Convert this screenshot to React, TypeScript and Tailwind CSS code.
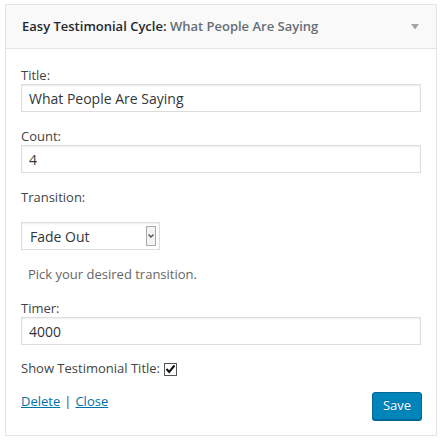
import { useState } from "react";

function Field({ label, value }: { label: string; value: string }) {
  return (
    <div className="mb-[15px]">
      <label className="block h-[18px] leading-[18px] text-[13px] text-[#444]">{label}</label>
      <input
        type="text"
        defaultValue={value}
        className="block w-[400px] h-[28px] px-[7px] border border-[#ddd] bg-white text-[14px] text-[#32373c] shadow-[inset_0_1px_2px_rgba(0,0,0,0.07)] outline-none"
      />
    </div>
  );
}

export default function App() {
  const [showTitle, setShowTitle] = useState(true);

  return (
    <div className="w-[441px] h-[445px] bg-white pt-[4px] pl-[5px] font-['Open_Sans',sans-serif]">
      <div className="w-[432px] border border-[#e5e5e5] bg-white">
        {/* widget header */}
        <div className="h-[44px] flex items-center justify-between pl-[16px] pr-[17px] bg-[#f9f9f9] border-b border-[#e5e5e5]">
          <h3 className="text-[13px] font-semibold text-[#23282d]">
            Easy Testimonial Cycle:{" "}
            <span className="text-[#666e75]">What People Are Saying</span>
          </h3>
          <svg width="8" height="6" viewBox="0 0 8 6" className="mt-[1px]">
            <path d="M0 0h8L4 5.5z" fill="#a0a5aa" />
          </svg>
        </div>

        {/* widget body */}
        <div className="pt-[17px] pb-[15px] pl-[15px] pr-[14px]">
          <Field label="Title:" value="What People Are Saying" />
          <Field label="Count:" value="4" />

          <div>
            <label className="block h-[18px] leading-[18px] text-[13px] text-[#444]">Transition:</label>
            <div className="mt-[16px] flex items-center w-[139px] h-[28px] border border-[#ddd] bg-white pl-[8px] pr-[3px] shadow-[inset_0_1px_2px_rgba(0,0,0,0.07)]">
              <span className="flex-1 text-[14px] text-[#32373c]">Fade Out</span>
              <span className="w-[10px] h-[20px] border border-[#a9a9a9] bg-[#f3f3f3] flex items-center justify-center">
                <svg width="6" height="4" viewBox="0 0 6 4">
                  <path d="M0.5 0.5L3 3L5.5 0.5" stroke="#555" strokeWidth="1.4" fill="none" />
                </svg>
              </span>
            </div>
            <p className="mt-[15px] pl-[7px] h-[18px] leading-[18px] text-[13px] text-[#666]">Pick your desired transition.</p>
          </div>

          <div className="mt-[16px]">
            <Field label="Timer:" value="4000" />
          </div>

          <div className="flex items-center h-[18px] text-[13px] text-[#444]">
            <span>Show Testimonial Title:</span>
            <button
              onClick={() => setShowTitle(!showTitle)}
              className="ml-[4px] w-[13px] h-[13px] border border-[#555] bg-white flex items-center justify-center"
            >
              {showTitle && (
                <svg width="11" height="10" viewBox="0 0 11 10">
                  <path d="M1.5 5L4.2 8L9.5 1.5" stroke="#111" strokeWidth="2" fill="none" />
                </svg>
              )}
            </button>
          </div>

          <div className="mt-[14px] flex items-start justify-between">
            <div className="h-[18px] leading-[18px] text-[13px] text-[#444]">
              <a href="#" className="text-[#0073aa] underline">Delete</a>
              <span className="mx-[4px]">|</span>
              <a href="#" className="text-[#0073aa] underline">Close</a>
            </div>
            <button className="w-[50px] h-[28px] rounded-[3px] bg-[#0085ba] border border-[#006799] text-white text-[13px] shadow-[0_1px_0_#006799] [text-shadow:0_-1px_1px_#006799]">
              Save
            </button>
          </div>
        </div>
      </div>
    </div>
  );
}
